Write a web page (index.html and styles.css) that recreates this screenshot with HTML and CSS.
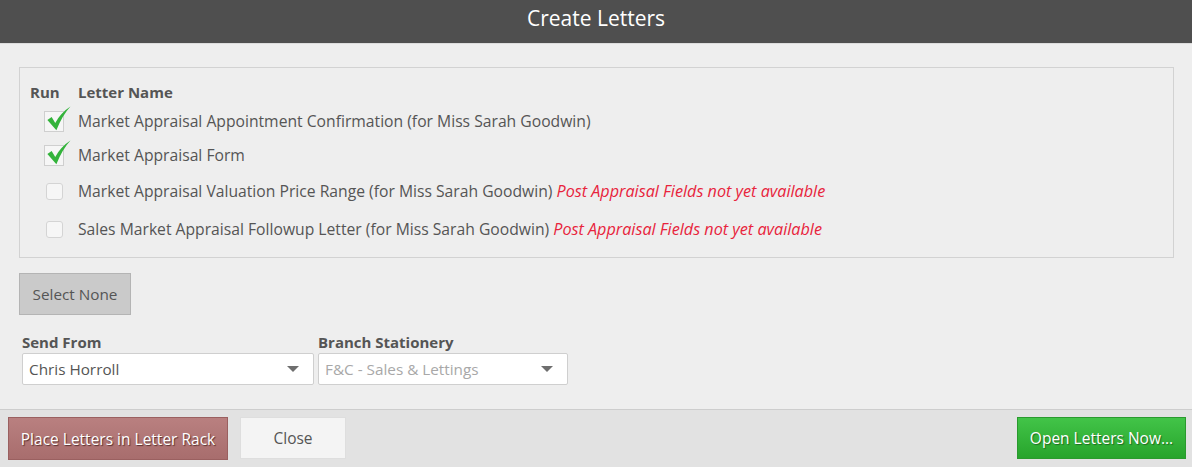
FILE: index.html
```html
<!DOCTYPE html>
<html>
<head>
<meta charset="utf-8">
<link rel="stylesheet" href="styles.css">
</head>
<body>
<div class="dialog">
  <header class="title">Create Letters</header>
  <main class="content">
    <section class="panel">
      <div class="row head"><span class="col-run">Run</span><span>Letter Name</span></div>
      <div class="row"><span class="col-run"><span class="cb checked"><svg viewBox="0 0 24 24" width="27" height="27"><path d="M3 12.5 L6.8 9.8 L10 15 Q15 6 23.5 0.5 Q16.5 8 11 21.5 Z" fill="#33b33b"/></svg></span></span><span>Market Appraisal Appointment Confirmation (for Miss Sarah Goodwin)</span></div>
      <div class="row"><span class="col-run"><span class="cb checked"><svg viewBox="0 0 24 24" width="27" height="27"><path d="M3 12.5 L6.8 9.8 L10 15 Q15 6 23.5 0.5 Q16.5 8 11 21.5 Z" fill="#33b33b"/></svg></span></span><span>Market Appraisal Form</span></div>
      <div class="row tall"><span class="col-run"><span class="cb"></span></span><span>Market Appraisal Valuation Price Range (for Miss Sarah Goodwin) <em class="warn">Post Appraisal Fields not yet available</em></span></div>
      <div class="row tall"><span class="col-run"><span class="cb"></span></span><span>Sales Market Appraisal Followup Letter (for Miss Sarah Goodwin) <em class="warn">Post Appraisal Fields not yet available</em></span></div>
    </section>
    <button class="btn-select">Select None</button>
    <div class="fields">
      <div class="field f1">
        <label>Send From</label>
        <div class="select"><span>Chris Horroll</span><span class="arrow"></span></div>
      </div>
      <div class="field f2">
        <label>Branch Stationery</label>
        <div class="select disabled"><span>F&amp;C - Sales &amp; Lettings</span><span class="arrow"></span></div>
      </div>
    </div>
  </main>
  <footer class="footer">
    <button class="btn btn-rack">Place Letters in Letter Rack</button>
    <button class="btn btn-close">Close</button>
    <span class="spacer"></span>
    <button class="btn btn-open">Open Letters Now...</button>
  </footer>
</div>
</body>
</html>
```
FILE: styles.css
```css
* { box-sizing: border-box; }
html, body { margin: 0; padding: 0; }
body {
  width: 1192px;
  height: 467px;
  overflow: hidden;
  background: #eeeeee;
  font-family: "Open Sans", "Noto Sans", sans-serif;
  font-size: 15px;
  color: #555555;
}
.dialog { display: flex; flex-direction: column; height: 467px; }
.title {
  height: 44px;
  background: #4f4f4f;
  color: #ffffff;
  font-size: 21px;
  text-align: center;
  line-height: 36px;
  border-bottom: 1px solid #dcdcdc;
}
.content {
  flex: 1;
  padding: 23px 18px 0 19px;
}
.panel {
  border: 1px solid #d2d2d2;
  padding: 12px 0 7px 10px;
  height: 191px;
}
.row {
  display: flex;
  align-items: center;
  height: 34px;
  font-size: 15.7px;
}
.row.head {
  height: 24px;
  font-weight: 700;
  font-size: 15px;
}
.row.tall { height: 38px; }
.col-run { width: 48px; flex: none; display: flex; }
.cb {
  display: inline-block;
  width: 17px;
  height: 17px;
  margin-left: 16px;
  border: 1px solid #d4d4d4;
  border-radius: 3px;
  background: #f6f6f6;
  position: relative;
}
.cb.checked {
  margin-left: 14px;
  width: 20px;
  height: 21px;
  border-radius: 0;
  border-color: #cfcfcf;
}
.cb svg { position: absolute; left: -1px; top: -6px; }
.warn { color: #e8243c; font-style: italic; font-size: 16.2px; }
.btn-select {
  margin-top: 15px;
  width: 112px;
  height: 42px;
  background: #cacaca;
  border: 1px solid #b4b4b4;
  font-family: inherit;
  font-size: 15.3px;
  color: #555;
  padding: 0;
}
.fields { display: flex; gap: 4px; margin-top: 17px; padding-left: 3px; }
.field label { display: block; font-weight: 700; font-size: 15px; line-height: 21px; }
.select {
  height: 32px;
  background: #ffffff;
  border: 1px solid #cfcfcf;
  border-radius: 2px;
  display: flex;
  align-items: center;
  justify-content: space-between;
  padding: 0 14px 0 6px;
  font-size: 15.3px;
}
.f1 .select { width: 292px; }
.f2 .select { width: 250px; }
.select.disabled { color: #a8a8a8; }
.arrow {
  width: 0; height: 0;
  border-left: 6px solid transparent;
  border-right: 6px solid transparent;
  border-top: 6px solid #6e6e6e;
}
.footer {
  height: 58px;
  background: #e2e2e2;
  border-top: 1px solid #cdcdcd;
  display: flex;
  align-items: flex-start;
  padding: 7px 6px 0 8px;
  gap: 12px;
}
.spacer { flex: 1; }
.btn {
  height: 43px;
  font-family: inherit;
  font-size: 15.5px;
  padding: 0;
}
.btn-rack {
  width: 220px;
  background: linear-gradient(#b98080, #a86d6d);
  border: 1px solid #9a6060;
  color: #fff;
  text-shadow: 1px 1px 1px #5a3030;
}
.btn-close {
  width: 106px;
  height: 42px;
  background: #f4f4f4;
  border: 1px solid #dedede;
  color: #555;
}
.btn-open {
  width: 169px;
  height: 42px;
  background: linear-gradient(#42c448, #27a42c);
  border: 1px solid #2a9a2e;
  color: #fff;
  text-shadow: 1px 1px 1px #1f6b22;
}
```
